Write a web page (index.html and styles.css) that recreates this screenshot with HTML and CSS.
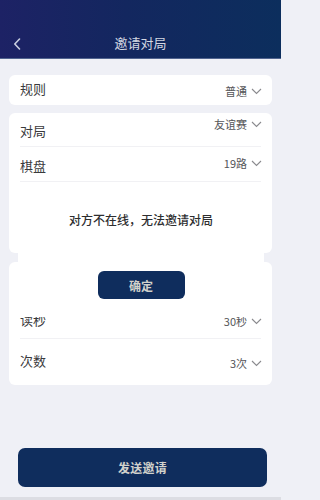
FILE: index.html
```html
<!DOCTYPE html>
<html lang="zh">
<head>
<meta charset="utf-8">
<link rel="stylesheet" href="styles.css">
</head>
<body>
<div class="page">
  <header class="topbar">
    <svg class="back" width="8" height="12" viewBox="0 0 8 12"><path d="M6.5 1 L1.8 6 L6.5 11" fill="none" stroke="#c9cee0" stroke-width="1.6" stroke-linecap="round" stroke-linejoin="round"/></svg>
    <div class="title">邀请对局</div>
  </header>

  <main class="content">
    <section class="card card-rule">
      <div class="row row-rule">
        <span class="label">规则</span>
        <span class="value">普通<svg class="chev" width="11" height="7" viewBox="0 0 11 7"><path d="M1 1 L5.5 5.5 L10 1" fill="none" stroke="#8a8a8e" stroke-width="1.1"/></svg></span>
      </div>
    </section>

    <section class="card card-game">
      <div class="row row-a sep">
        <span class="label">对局</span>
        <span class="value">友谊赛<svg class="chev" width="11" height="7" viewBox="0 0 11 7"><path d="M1 1 L5.5 5.5 L10 1" fill="none" stroke="#8a8a8e" stroke-width="1.1"/></svg></span>
      </div>
      <div class="row row-b sep">
        <span class="label">棋盘</span>
        <span class="value">19路<svg class="chev" width="11" height="7" viewBox="0 0 11 7"><path d="M1 1 L5.5 5.5 L10 1" fill="none" stroke="#8a8a8e" stroke-width="1.1"/></svg></span>
      </div>
    </section>

    <section class="card card-time">
      <div class="row row-c sep">
        <span class="label">读秒</span>
        <span class="value">30秒<svg class="chev" width="11" height="7" viewBox="0 0 11 7"><path d="M1 1 L5.5 5.5 L10 1" fill="none" stroke="#8a8a8e" stroke-width="1.1"/></svg></span>
      </div>
      <div class="row row-d">
        <span class="label">次数</span>
        <span class="value">3次<svg class="chev" width="11" height="7" viewBox="0 0 11 7"><path d="M1 1 L5.5 5.5 L10 1" fill="none" stroke="#8a8a8e" stroke-width="1.1"/></svg></span>
      </div>
    </section>

    <button class="send">发送邀请</button>
  </main>
  <div class="bottom-strip"></div>

  <div class="dialog">
    <p class="dialog-msg">对方不在线，无法邀请对局</p>
    <button class="ok">确定</button>
  </div>
</div>
</body>
</html>
```

FILE: styles.css
```css
* { box-sizing: border-box; }
html, body { margin: 0; padding: 0; }
body {
  width: 281px;
  height: 500px;
  overflow: hidden;
  background: #eff0f6;
  font-family: "Noto Sans CJK SC", "Noto Sans", sans-serif;
}
.page { position: relative; width: 281px; height: 500px; }

.topbar {
  height: 59px;
  background: linear-gradient(90deg, #1d2265 0%, #13275f 45%, #0c2e5d 100%);
  border-bottom: 1px solid #51648f;
  display: flex;
  align-items: flex-end;
  justify-content: center;
  position: relative;
  padding-bottom: 6px;
}
.back { position: absolute; left: 13px; top: 38px; }
.title {
  color: #d3d7e2;
  font-size: 13px;
  line-height: 18px;
}

.content {
  display: flex;
  flex-direction: column;
  padding: 16px 9px 0;
}
.card {
  background: #fff;
  border-radius: 6px;
  padding: 0 11px;
}
.card-rule { height: 30px; }
.card-game { height: 140px; margin-top: 8px; }
.card-time { height: 123px; margin-top: 9px; }

.row {
  display: flex;
  justify-content: space-between;
  align-items: flex-start;
}
.sep { border-bottom: 1px solid #f1f1f4; }
.label { font-size: 13px; line-height: 16px; color: #3a3a3c; }
.value {
  font-size: 11px;
  line-height: 14px;
  color: #555558;
  display: flex;
  align-items: center;
}
.chev { margin-left: 4px; margin-right: -1px; }

.row-rule { height: 30px; }
.row-rule .label { margin-top: 6px; }
.row-rule .value { margin-top: 9px; }

.row-a { height: 34px; }
.row-a .label { margin-top: 10px; }
.row-a .value { margin-top: 4px; }
.row-b { height: 35px; }
.row-b .label { margin-top: 11px; }
.row-b .value { margin-top: 9px; }

.row-c { height: 77px; align-items: flex-end; padding-bottom: 10px; }
.row-d { height: 46px; }
.row-d .label { margin-top: 14px; }
.row-d .value { margin-top: 17px; }

.send {
  margin-top: 63px;
  margin-left: 9px;
  width: 249px;
  height: 39px;
  border: none;
  border-radius: 7px;
  background: #0f2d5d;
  color: #d2d2cc;
  font-family: inherit;
  font-size: 12px;
  font-weight: 700;
  letter-spacing: 0.3px;
}
.bottom-strip {
  position: absolute;
  left: 0; right: 0; bottom: 0;
  height: 3px;
  background: #dcdde3;
}

.dialog {
  position: absolute;
  left: 18px;
  top: 186px;
  width: 246px;
  height: 131px;
  background: #fff;
  display: flex;
  flex-direction: column;
  align-items: center;
}
.dialog-msg {
  margin: 25px 0 0;
  font-size: 12px;
  line-height: 18px;
  font-weight: 500;
  color: #2e2e30;
}
.ok {
  margin-top: 42px;
  width: 87px;
  height: 28px;
  border: none;
  border-radius: 6px;
  background: #0f2d5d;
  color: #d2d2cc;
  font-family: inherit;
  font-size: 12px;
  font-weight: 700;
}
```
